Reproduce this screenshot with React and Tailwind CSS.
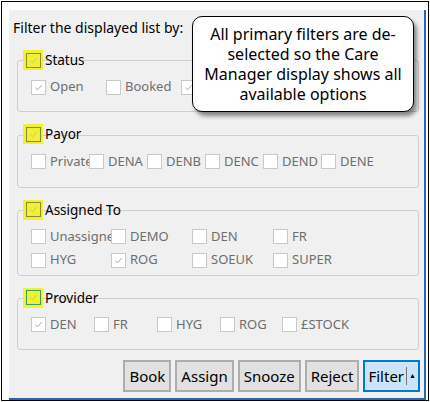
import React from 'react';

const Box = ({ checked }) => (
  <span className="relative inline-flex h-[15px] w-[15px] shrink-0 items-center justify-center border border-[#c8c8c8] bg-white">
    {checked && (
      <svg viewBox="0 0 10 10" className="h-[9px] w-[9px]">
        <path d="M1.5 5.2 L4 7.6 L8.6 2.4" fill="none" stroke="#a0a0a0" strokeWidth="1" />
      </svg>
    )}
  </span>
);

const Item = ({ label, checked, w }) => (
  <div className="flex items-center gap-[4px]" style={{ width: w }}>
    <Box checked={checked} />
    <span className="whitespace-nowrap text-[13px] text-[#6e6e6e]">{label}</span>
  </div>
);

const Group = ({ title, legendOutline, children, h }) => (
  <div className="relative ml-[8px] mr-[5px] mt-[12px]">
    <div className="flex items-center">
      <span className="ml-[6px] inline-flex h-[20px] w-[20px] items-center justify-center bg-[#f0f035]">
        <span className={`inline-flex h-[15px] w-[15px] items-center justify-center border ${legendOutline} bg-[#f0f035]`}>
          <svg viewBox="0 0 10 10" className="h-[9px] w-[9px]">
            <path d="M1.5 5.2 L4 7.6 L8.6 2.4" fill="none" stroke="#c8c850" strokeWidth="1" />
          </svg>
        </span>
      </span>
      <span className="ml-[2px] text-[13.5px] text-black">{title}</span>
    </div>
    <div className="-mt-[10px] rounded-[3px] border border-[#cfcfcf] px-[13px] pt-[16px]" style={{ height: h }}>
      {children}
    </div>
  </div>
);

export default function App() {
  return (
    <div className="h-[402px] w-[430px] bg-white p-[1px] font-['Lato',sans-serif]">
      <div className="h-full w-full border border-black">
        <div className="ml-[7px] mt-[8px] h-[390px] w-[417px] border-r-2 border-b-2 border-[#2a64b4] bg-[#f0f0f0]">
          <div className="relative">
            <div className="pl-[4px] pt-[7px] text-[14px] text-black">Filter the displayed list by:</div>
            <Group title="Status" legendOutline="border-[#8a8a3a]" h={52}>
              <div className="flex">
                <Item label="Open" checked w={75} />
                <Item label="Booked" w={75} />
                <Item label="" checked w={75} />
              </div>
            </Group>
            <Group title="Payor" legendOutline="border-[#8a8a3a]" h={53}>
              <div className="flex">
                <Item label="Private" w={58} />
                <Item label="DENA" w={58} />
                <Item label="DENB" w={58} />
                <Item label="DENC" w={58} />
                <Item label="DEND" w={58} />
                <Item label="DENE" w={58} />
              </div>
            </Group>
            <Group title="Assigned To" legendOutline="border-[#8a8a3a]" h={66}>
              <div className="flex flex-col gap-[4px]">
                <div className="flex">
                  <Item label="Unassigned" w={80} />
                  <Item label="DEMO" w={81} />
                  <Item label="DEN" w={81} />
                  <Item label="FR" w={81} />
                </div>
                <div className="flex">
                  <Item label="HYG" w={80} />
                  <Item label="ROG" checked w={81} />
                  <Item label="SOEUK" w={81} />
                  <Item label="SUPER" w={81} />
                </div>
              </div>
            </Group>
            <Group title="Provider" legendOutline="border-[#3aa060]" h={52}>
              <div className="flex">
                <Item label="DEN" checked w={63} />
                <Item label="FR" w={63} />
                <Item label="HYG" w={63} />
                <Item label="ROG" w={62} />
                <Item label="£STOCK" w={70} />
              </div>
            </Group>
            <div className="mr-[4px] mt-[10px] flex justify-end gap-[4px]">
              {['Book', 'Assign', 'Snooze', 'Reject'].map((b) => (
                <button
                  key={b}
                  className="h-[32px] border-2 border-[#adadad] bg-[#e1e1e1] px-[4px] text-[15px] text-black"
                >
                  {b}
                </button>
              ))}
              <button className="flex h-[32px] items-center border-2 border-[#0078d7] bg-[#cce4f7] pl-[3px] pr-[2px] text-[15px] text-black">
                Filter
                <span className="ml-[2px] h-[18px] border-l border-[#777]" />
                <span className="ml-[2px] text-[7px]">▲</span>
              </button>
            </div>
            <div className="absolute left-[183px] top-[6px] flex h-[96px] w-[222px] items-center justify-center rounded-[10px] border border-black bg-white px-[6px] text-center font-['Liberation_Sans',sans-serif] text-[16px] leading-[20px] text-black shadow-[3px_4px_4px_rgba(0,0,0,0.45)]">
              All primary filters are de-selected so the Care Manager display shows all available options
            </div>
          </div>
        </div>
      </div>
    </div>
  );
}
